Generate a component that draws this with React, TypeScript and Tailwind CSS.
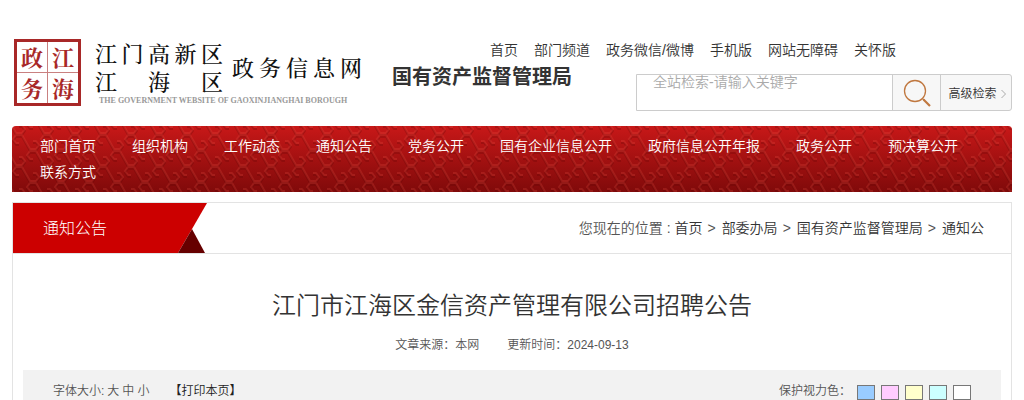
import { useId, useState } from 'react'

const topLinks = ['首页', '部门频道', '政务微信/微博', '手机版', '网站无障碍', '关怀版']

const navLinks = [
  '部门首页',
  '组织机构',
  '工作动态',
  '通知公告',
  '党务公开',
  '国有企业信息公开',
  '政府信息公开年报',
  '政务公开',
  '预决算公开',
  '联系方式',
]

const crumbs = ['首页', '部委办局', '国有资产监督管理局', '通知公']

const swatches = [
  { name: '蓝色', className: 'bg-[#99ccff]' },
  { name: '粉色', className: 'bg-[#ffccff]' },
  { name: '黄色', className: 'bg-[#ffffcc]' },
  { name: '青色', className: 'bg-[#ccffff]' },
  { name: '白色', className: 'bg-white' },
]

function Logo() {
  return (
    <a href="#" aria-label="江门高新区江海区政务信息网" className="flex shrink-0 font-['KaiTi','AR_PL_UKai_CN','Noto_Serif_CJK_SC','Noto_Sans_CJK_SC',serif] text-[#111]">
      <span className="grid h-[67px] w-[67px] grid-cols-2 gap-px border-[3px] border-[#a82828] bg-[#c98080] text-center text-[22px] leading-[30px] font-bold text-[#a82828]">
        <span className="bg-white">政</span>
        <span className="bg-white">江</span>
        <span className="bg-white">务</span>
        <span className="bg-white">海</span>
      </span>
      <span className="ml-[14px] flex flex-col">
        <span className="flex items-center">
          <span className="flex w-[128px] flex-col text-[22px] leading-7 font-medium">
            <span className="flex justify-between">
              {[...'江门高新区'].map((c) => <span key={c}>{c}</span>)}
            </span>
            <span className="flex justify-between">
              {[...'江海区'].map((c) => <span key={c}>{c}</span>)}
            </span>
          </span>
          <span className="ml-[9px] flex w-[130px] justify-between text-[22px] font-medium">
            {[...'政务信息网'].map((c) => <span key={c}>{c}</span>)}
          </span>
        </span>
        <span className="ml-1 font-['Liberation_Serif',serif] text-[8px] leading-[11px] font-bold whitespace-nowrap text-[#999]">
          THE GOVERNMENT WEBSITE OF GAOXINJIANGHAI BOROUGH
        </span>
      </span>
    </a>
  )
}

function SearchBar() {
  return (
    <form className="flex h-[37px] w-[376px] rounded-r-[3px] border border-[#ccc] bg-[#f7f7f7]" onSubmit={(e) => e.preventDefault()}>
      <input
        type="text"
        aria-label="全站检索"
        placeholder="全站检索-请输入关键字"
        className="min-w-0 flex-1 bg-white pb-[22px] pl-4 text-sm leading-[14px] outline-none placeholder:text-[#aaa]"
      />
      <button type="submit" aria-label="搜索" className="flex w-[49px] items-center justify-center border-x border-[#ccc]">
        <svg width="30" height="30" viewBox="0 0 30 30" fill="none" stroke="#c07840">
          <circle cx="13" cy="13" r="10.5" strokeWidth="1.3" />
          <path d="M20 20.500l2.500 1.500" strokeWidth="1.300" />
          <path d="M21.500 21.500l6.500 6.500" strokeWidth="2.200" />
        </svg>
      </button>
      <a href="#" className="flex w-[70px] items-center justify-center gap-1 pt-[2px] pl-[2px] text-xs text-[#333]">
        高级检索
        <svg width="5" height="10" viewBox="0 0 5 10" fill="none" stroke="#aaa">
          <path d="M.5 1l4 4-4 4" />
        </svg>
      </a>
    </form>
  )
}

// interlocking hexagonal scrolls, staggered by half a tile
function NavPattern() {
  const id = useId()
  const scroll = 'M-7 1h-3l-3-4 3-4h6l4 7 4 7h6l3-4-3-4h-3'
  const spots = [[0, 0], [28, 0], [14, 16], [0, 32], [28, 32], [-14, 16], [42, 16]]
  return (
    <svg className="absolute inset-0 h-full w-full" aria-hidden="true">
      <defs>
        <pattern id={id} width="28" height="32" patternUnits="userSpaceOnUse">
          <g fill="none" strokeWidth="2" strokeLinejoin="round">
            {spots.map(([x, y]) => (
              <g key={`${x},${y}`} transform={`translate(${x} ${y})`}>
                <path d={scroll} stroke="#500000" strokeOpacity=".22" transform="translate(0 2)" />
                <path d={scroll} stroke="#ff6655" strokeOpacity=".18" />
              </g>
            ))}
          </g>
        </pattern>
      </defs>
      <rect width="100%" height="100%" fill={`url(#${id})`} />
    </svg>
  )
}

export default function App() {
  const [size, setSize] = useState('中')

  return (
    <div className="h-screen overflow-hidden bg-white px-3 font-['Liberation_Sans','Noto_Sans_CJK_SC',sans-serif] text-sm font-[350] text-[#333]">
      <header className="flex h-[126px] justify-between">
        <div className="flex pt-[39px] pl-[2px]">
          <Logo />
          <h2 className="ml-[30px] pt-6 text-[20px] leading-7 font-bold whitespace-nowrap">国有资产监督管理局</h2>
        </div>
        <div className="-ml-24 flex flex-col items-end pt-10">
          <nav aria-label="站点导航" className="mr-[116px] flex gap-4 leading-5 whitespace-nowrap">
            {topLinks.map((l) => <a key={l} href="#">{l}</a>)}
          </nav>
          <div className="mt-[14px]">
            <SearchBar />
          </div>
        </div>
      </header>

      <nav aria-label="主导航" className="relative overflow-hidden rounded-t-[4px] bg-linear-to-b from-[#c81818] to-[#800a0a] px-[10px] py-[7px]">
        <NavPattern />
        <ul className="relative flex flex-wrap">
          {navLinks.map((l) => (
            <li key={l} className="px-[18px] leading-[26px]">
              <a href="#" className="text-white">{l}</a>
            </li>
          ))}
        </ul>
      </nav>

      <main className="mt-[10px] border border-[#e3e3e3]">
        <div className="flex h-[51px] items-center justify-between border-b border-[#e3e3e3]">
          <div className="relative flex h-[50px] w-[194px] items-center">
            <svg className="absolute inset-0" width="194" height="50" viewBox="0 0 194 50" aria-hidden="true">
              <path d="M0 0h194l-15 26-14 24H0z" fill="#c00" />
              <path d="M179 26l13 24h-27z" fill="#600" />
            </svg>
            <h3 className="relative pt-[2px] pl-[30px] text-base font-light text-white">通知公告</h3>
          </div>
          <div className="mr-[27px] flex text-sm">
            <span className="text-[#555]">您现在的位置 :&nbsp;</span>
            {crumbs.map((c, i) => (
              <span key={c}>
                {i > 0 && <span className="pr-[6px] pl-[5px] text-[#555]">&gt;</span>}
                <a href="#">{c}</a>
              </span>
            ))}
          </div>
        </div>

        <h1 className="mt-8 text-center text-2xl leading-10 font-[350]">江门市江海区金信资产管理有限公司招聘公告</h1>
        <p className="mt-[9px] flex justify-center gap-7 text-xs leading-5 text-[#555]">
          <span>文章来源：本网</span>
          <span>更新时间：2024-09-13</span>
        </p>

        <div className="mx-[10px] mt-[15px] flex h-[42px] items-center justify-between bg-[#f2f2f2] px-[30px] text-xs text-[#555]">
          <div className="flex items-center">
            <span>字体大小:</span>
            {['大', '中', '小'].map((s) => (
              <button key={s} type="button" aria-pressed={size === s} onClick={() => setSize(s)} className="ml-[3px]">{s}</button>
            ))}
            <button type="button" className="ml-5 text-[#222]">【打印本页】</button>
          </div>
          <div className="flex items-center">
            <span className="mr-[6px]">保护视力色：</span>
            <div className="flex gap-[6px] pt-[2px]">
              {swatches.map((s) => (
                <button key={s.name} type="button" aria-label={s.name} className={`h-[15px] w-[18px] border border-[#777] ${s.className}`} />
              ))}
            </div>
          </div>
        </div>
      </main>
    </div>
  )
}
